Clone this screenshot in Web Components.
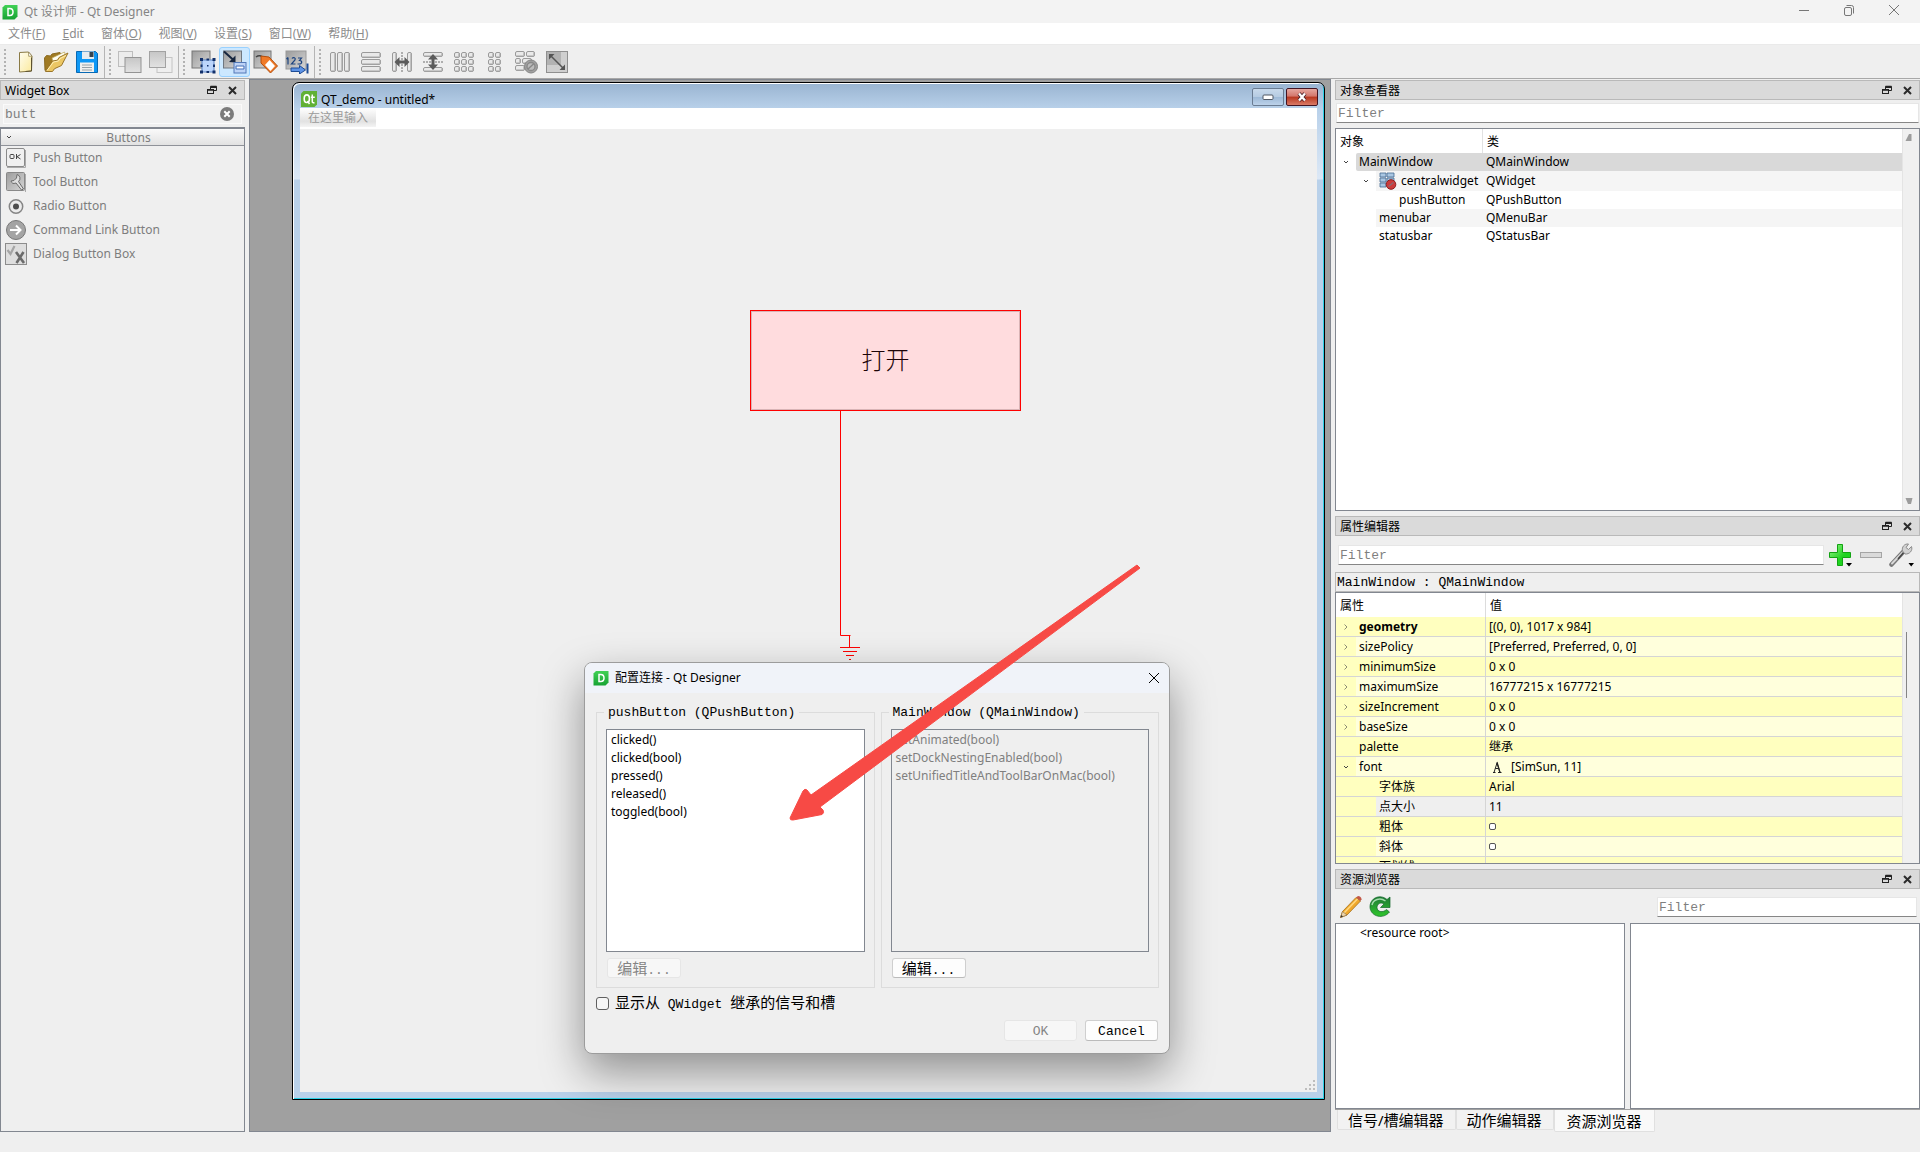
<!DOCTYPE html>
<html lang="zh-CN">
<head>
<meta charset="utf-8">
<title>Qt 设计师 - Qt Designer</title>
<style>
:root{
  --ui:"Noto Sans","Noto Sans CJK SC",sans-serif;
  --mono:"Liberation Mono","Noto Sans CJK SC",monospace;
  --frame:#828790;
  --face:#efefef;
}
html,body{margin:0;height:100%}
body{background:var(--face);font:12px/18px var(--ui);color:#000}
</style>
</head>
<body>
<designer-app></designer-app>
<script>
const BASE = `*{box-sizing:border-box}
button,input{font:inherit;color:inherit;margin:0;padding:0;border:0;background:none;outline:0;min-width:0}
ul{margin:0;padding:0;list-style:none}
table{border-collapse:separate;border-spacing:0}
th{font-weight:400;text-align:left}`;

function define(name, css, html, setup){
  const tpl = document.createElement('template');
  tpl.innerHTML = `<style>${BASE}${css}</style>${html}`;
  customElements.define(name, class extends HTMLElement{
    constructor(){
      super();
      this.attachShadow({mode:'open'}).append(tpl.content.cloneNode(true));
    }
    connectedCallback(){
      if(setup && !this.ready){ this.ready = true; setup(this, this.shadowRoot); }
    }
  });
}

/* ---------- icons: [width, height, svg body] ---------- */
const bar = (x,y,w,h)=>`<rect x="${x+.5}" y="${y+.5}" width="${w-1}" height="${h-1}" rx="1.5" fill="#e9e9e9" stroke="#9a9a9a"/><path d="M${x+1.5} ${y+h-1}h${w-3}M${x+w-1} ${y+1.5}v${h-3}" stroke="#a8a8a8" stroke-width="1.2"/>`;
const cells = (cols,x0)=>{let s='';for(let r=0;r<3;r++)for(let c=0;c<cols;c++)s+=bar(x0+c*7,2+r*7,6,6);return s;};
const GREY = `<defs><linearGradient id="g" x1="0" y1="0" x2="0" y2="1"><stop offset="0" stop-color="#c6c6c6"/><stop offset="1" stop-color="#e2e2e2"/></linearGradient><linearGradient id="d" x1="0" y1="0" x2="1" y2="1"><stop offset="0" stop-color="#9c9c9c"/><stop offset="1" stop-color="#d6d6d6"/></linearGradient></defs>`;
const ICONS = {
  app:[16,16,`<defs><linearGradient id="a" x1="0" y1="0" x2="0" y2="1"><stop offset="0" stop-color="#41d155"/><stop offset="1" stop-color="#17a333"/></linearGradient></defs><path d="M3 1h12.5v11.5l-3 3H.5V3.500z" fill="url(#a)"/><path d="M6 4.500h1.800c2 0 3.200 1.300 3.200 3.500s-1.200 3.500-3.200 3.500H6z" fill="none" stroke="#fff" stroke-width="1.500"/>`],
  min:[12,12,`<path d="M1 6.500h10" stroke="#777"/>`],
  restore:[12,12,`<rect x="1.500" y="3.500" width="7" height="8" rx="1.500" fill="none" stroke="#777"/><path d="M3.500 1.500h5a2 2 0 0 1 2 2v6" fill="none" stroke="#777"/>`],
  close:[12,12,`<path d="M1 1l10 10M11 1l-10 10" stroke="currentColor" fill="none"/>`],
  float:[10,10,`<path d="M3.500 4V1.500h6v4H7M3.500 2.500h6" fill="none" stroke="#222"/><rect x=".5" y="4.500" width="6" height="4" fill="none" stroke="#222"/><path d="M.5 5h6M3.500 1.500h6" stroke="#222" stroke-width="1.600"/>`],
  x:[9,9,`<path d="M1 1l7 7M8 1l-7 7" stroke="#2b2b2b" stroke-width="2"/>`],
  newfile:[24,24,`<defs><linearGradient id="n" x1="0" y1="0" x2="1" y2="1"><stop offset="0" stop-color="#fffdf0"/><stop offset="1" stop-color="#fbe99b"/></linearGradient></defs><path d="M6.500 2.500l9-.5 3.500 4-.5 15-12 1z" fill="url(#n)" stroke="#8a7a45"/><path d="M15.500 2l.2 4.300 3.300-.2z" fill="#fff" stroke="#8a7a45" stroke-width=".7"/><path d="M18.500 7.500v13.500l-6 .5" stroke="#5d5230" fill="none"/>`],
  open:[26,24,`<path d="M2 20.500L1.500 8l2-2.500 4 .5 1.500-2L17 2.500l1 2.500-8 11z" fill="#a07a22" stroke="#8a6a20"/><path d="M9 8l12.500-6 1 4-12 8z" fill="#fffef0" stroke="#bba65a" stroke-width=".7"/><path d="M2.500 21.500L9.500 11l5-.8 1.500-2.700 9-4.500-6.500 12.500-7 3.200-2 2.800z" fill="#ecc764" stroke="#99752a"/><path d="M4 20.500l6.500-8.500 5-1 1.500-2.500 6-3" stroke="#fff0b8" fill="none"/>`],
  save:[24,24,`<path d="M1.500 1.500h19l2 2v19h-21z" fill="#0f98f5" stroke="#0869b4"/><path d="M7 1.500h12v7.500H7z" fill="#e8edf0"/><path d="M14.500 2h4v5h-4z" fill="#36444f"/><path d="M5 12.500h14V22H5z" fill="#f1f1ef"/><path d="M7 15h10M7 17.500h10M7 20h10" stroke="#97a2a8"/>`],
  raise:[26,24,GREY+`<rect x="1.500" y="1.500" width="14" height="15" fill="#ececec" stroke="#bdbdbd"/><rect x="8" y="7.500" width="16" height="15" fill="url(#g)" stroke="#949494"/>`],
  lower:[26,24,GREY+`<rect x="9" y="7.500" width="15" height="15" fill="#efefef" stroke="#c4c4c4"/><rect x="1.500" y="1.500" width="16" height="16" fill="url(#g)" stroke="#a2a2a2"/>`],
  widgets:[26,24,GREY+`<rect x="1" y="1" width="18" height="17" fill="url(#d)" stroke="#777"/><rect x="11" y="10" width="12" height="12" fill="#bcd5fb" stroke="#5b83c4"/><path d="M9 8h3v3H9zM21.500 8h3v3h-3zM9 20.500h3v3H9zM21.500 20.500h3v3h-3zM15.500 8.500h2.500v2h-2.500zM15.500 21h2.500v2h-2.500zM9.500 14.500h2v2.500h-2zM22 14.500h2v2.500h-2zM16 15h1.500v1.500H16z" fill="#12306b"/>`],
  signals:[26,24,GREY+`<rect x="1.500" y="1" width="18" height="17" fill="url(#d)" stroke="#6f7780"/><path d="M2 1.500l10 9" stroke="#17263f" stroke-width="2"/><path d="M13.500 12.500V5.500L7 12z" fill="#17263f"/><rect x="12" y="12.500" width="12" height="10.500" fill="#bdd3f6" stroke="#5379b8"/><path d="M14.500 17.500h7" stroke="#fff" stroke-width="2.500"/><path d="M14 16h8v3h-8z" fill="none" stroke="#4973b8"/>`],
  buddy:[26,24,GREY+`<rect x="1" y="1" width="17" height="17" fill="url(#d)" stroke="#777"/><path d="M3 7c4-3 6 0 9 2" stroke="#444" fill="none" stroke-width="1.500"/><path d="M8 6l8 1 8.500 9-7 7L8 13z" fill="#f07a28" stroke="#b24d0c"/><path d="M16.500 10l5.500 6-4.500 5-5.500-6z" fill="#fff"/>`],
  tabs:[26,24,GREY+`<rect x="2" y="1" width="20" height="18" fill="url(#d)" stroke="#999"/><path d="M4 7.500v7M2.500 9l1.500-1.500M8 8.500c1.500-2 4-.5 3 1.500l-3.500 4h4M14 8h3.500l-2 2.500c3 0 3 3.500-.5 3.500h-1.500" stroke="#1c437f" stroke-width="1.200" fill="none"/><path d="M7 18h8.500v-2.500l6 4.500-6 4v-2.500H7z" fill="#5c93e6" stroke="#1e4c95"/><path d="M23.500 13.500v10" stroke="#1e4c95" stroke-width="2"/>`],
  hlayout:[24,24,bar(2,2,6,20)+bar(9,2,6,20)+bar(16,2,6,20)],
  vlayout:[24,24,bar(2,2,20,6)+bar(2,9,20,6)+bar(2,16,20,6)],
  hsplit:[24,24,bar(2,2,5,20)+bar(17,2,5,20)+`<path d="M12 2v20" stroke="#999" stroke-width="1.500" stroke-dasharray="2 1"/><path d="M4.500 12l5-5v3.500h5V7l5 5-5 5v-3.500h-5V17z" fill="#5b5b5b"/>`],
  vsplit:[24,24,bar(2,2,20,5)+bar(2,17,20,5)+`<path d="M2 12h20" stroke="#999" stroke-width="1.500" stroke-dasharray="2 1"/><path d="M12 4l5 5.500h-3.500v5H17L12 20l-5-5.500h3.500v-5H7z" fill="#5b5b5b"/>`],
  grid:[24,24,cells(3,2)],
  form:[24,24,cells(2,5)],
  breaklayout:[26,24,bar(2,1,10,6)+bar(13,1,9,6)+bar(2,8,6,6)+bar(9,8,10,6)+bar(2,15,10,6)+`<circle cx="18" cy="16.500" r="6.500" fill="#a0a0a0" stroke="#858585"/><circle cx="18" cy="16.500" r="4" fill="#bcbcbc" stroke="#888" stroke-width="1.300"/><path d="M15 19l6-5.500" stroke="#888" stroke-width="1.500"/>`],
  adjust:[24,24,GREY+`<rect x="1.500" y="1.500" width="21" height="21" fill="#cfcfcf" stroke="#8f8f8f"/><rect x="2" y="2" width="14" height="13" fill="#b2b2b2"/><path d="M5.500 5.500l13 13" stroke="#555" stroke-width="1.500"/><path d="M4 4h5.500L4 9.500zM20 20h-5.500l5.500-5.500z" fill="#555"/>`],
  clear:[14,14,`<circle cx="7" cy="7" r="7" fill="#7b7b7b"/><path d="M4.300 4.300l5.400 5.400M9.700 4.300l-5.400 5.400" stroke="#fff" stroke-width="2"/>`],
  chevdown:[8,8,`<path d="M2 3L4 5l2-2" fill="none" stroke="#444"/>`],
  chevright:[8,8,`<path d="M2.500 1.500L5 4 2.500 6.500" fill="none" stroke="#8d8d75"/>`],
  pushb:[22,22,`<rect x="1.500" y="1.500" width="18" height="18" rx="1.500" fill="#f0f0f0" stroke="#8a8a8a"/><path d="M2 20.500h18.500V3" stroke="#aaa" fill="none"/><rect x="5" y="7.500" width="4" height="4" rx="1" fill="none" stroke="#444"/><path d="M11.500 7v5M15.500 7.500L12 9.700l3.500 2.300" fill="none" stroke="#444"/>`],
  toolb:[22,22,GREY+`<rect x="1.500" y="1.500" width="18" height="18" rx="1" fill="url(#d)" stroke="#888"/><path d="M20.500 3v18" stroke="#aaa"/><path d="M12 3.500a4 4 0 0 1 1.500 7l5 7.500-2 1-5.500-7c-3 1-4 .5-5-2l3-.5 2.500-2.500z" fill="#dedede" stroke="#6b6b6b"/>`],
  radiob:[22,22,`<circle cx="11" cy="11.500" r="6.700" fill="#ececec" stroke="#858585" stroke-width="1.500"/><circle cx="11" cy="11.500" r="3" fill="#4e4e4e"/>`],
  linkb:[22,22,`<circle cx="11" cy="11" r="9.500" fill="#a4a4a4" stroke="#777"/><path d="M5 11h10M11 6.500l4.500 4.500-4.500 4.500" fill="none" stroke="#fff" stroke-width="2"/>`],
  dialogb:[22,22,`<rect x=".5" y=".5" width="21" height="21" fill="#dedede" stroke="#8c8c8c"/><path d="M2.500 7l3 4 4-8" fill="none" stroke="#a5a5a5" stroke-width="2.200"/><path d="M11 9l8 11M18.500 9l-7 11" stroke="#6b6b6b" stroke-width="2.600"/>`],
  qt:[16,16,`<path d="M2.500 0H16v13.500L13.500 16H0V2.500z" fill="#61b136"/><ellipse cx="5.800" cy="7.700" rx="2.600" ry="3.800" fill="none" stroke="#fff" stroke-width="1.600"/><path d="M6.500 10l2 3M9.800 6.200h4M11.300 3.500v7c0 1.200.8 1.500 2.200 1.200" fill="none" stroke="#fff" stroke-width="1.500"/>`],
  central:[18,18,`<path d="M1 1h6v4H1zM8 1h7v4H8zM1 6h6v4H1zM8 6h7v4H8zM1 11h6v4H1z" fill="#a9c6e2" stroke="#456a92" stroke-width=".8"/><circle cx="12" cy="12.500" r="4.800" fill="#cc3b3b" stroke="#8d1f1f"/><path d="M9.500 14.500l5-4" stroke="#8d6a72" stroke-width="1.500"/>`],
  plus:[24,24,`<defs><linearGradient id="p" x1="0" y1="0" x2="1" y2="1"><stop offset="0" stop-color="#9cf58c"/><stop offset=".6" stop-color="#1fd320"/></linearGradient></defs><path d="M9.500 1.500h5v8h8v5h-8v8h-5v-8h-8v-5h8z" fill="url(#p)" stroke="#12a312"/><path d="M18 20h6l-3 3.500z" fill="#000"/>`],
  minus:[24,24,`<rect x="1.500" y="9.500" width="21" height="5" fill="#dadada" stroke="#a5a5a5"/>`],
  wrench:[26,24,`<path d="M2.500 21.500L15 8" stroke="#777" stroke-width="4.500" stroke-linecap="round"/><path d="M3 20.500L15.500 7.500" stroke="#d8d8d8" stroke-width="2" stroke-linecap="round"/><path d="M9 16l6-7" stroke="#444" stroke-width="1.500"/><path d="M13.500 8c-1-4 2-7.500 6-7l-2.500 3.500 2.500 2 3-3c1.500 4-2 8-6.500 7.500z" fill="#d2d2d2" stroke="#8c8c8c"/><path d="M19.500 20h5.500l-2.800 3.500z" fill="#000"/>`],
  afont:[12,16,`<path d="M2 13.500h2.500M7 13.500h3.500M3 13.500L6 4l3 9.500M4.300 9.500h3.400" fill="none" stroke="#222"/><path d="M6 3l3 10.500" stroke="#222" stroke-width="1.200"/>`],
  pencil:[24,24,`<path d="M1.500 22.500l2-6L17 2.500l4.500 3.500L8 20z" fill="#f0a82c" stroke="#a5701a" stroke-width=".8"/><path d="M5 18L18.500 4" stroke="#ffd982" stroke-width="1.500"/><path d="M1.500 22.500l2-6 4.500 3.500z" fill="#ead3aa" stroke="#8b6a3a" stroke-width=".6"/><path d="M1.500 22.500l.8-2.500 1.800 1.500z" fill="#333"/><path d="M17 2.500l2-1.500c2 0 3.500 1.500 3.500 3.300L21.500 6z" fill="#c35848"/>`],
  reload:[24,24,`<defs><linearGradient id="r" x1="0" y1="0" x2="0" y2="1"><stop offset="0" stop-color="#1f7a35"/><stop offset="1" stop-color="#2fc52b"/></linearGradient></defs><path d="M22 2v10.500H12.500l3.500-3.500c-3-2-7-.5-7 3.500 0 4.500 6 5.500 9.500 2l3 2.500c-6 7.500-18.500 5-19.500-4.500C1.500 3 12-1.500 19 4.500z" fill="url(#r)" stroke="#14672b" stroke-width=".7"/><path d="M4 10C5 4.500 12 2 17.500 6" fill="none" stroke="#a6dcae" stroke-width="1.500"/>`],
  mdimin:[12,8,`<rect x="1" y="2" width="10" height="4.500" rx="1" fill="#fff" stroke="#515965"/>`],
  mdiclose:[14,12,`<path d="M4 2.500l6 7M10 2.500l-6 7" stroke="#4a2028" stroke-width="4"/><path d="M4 2.500l6 7M10 2.500l-6 7" stroke="#fff" stroke-width="2.300"/>`],
  up:[12,10,`<path d="M6 1l2.500 0V8H2.500z" fill="#9c9c9c"/>`],
  down:[12,10,`<path d="M2.500 2h7L8 8H5z" fill="#9c9c9c"/>`],
  grip:[10,10,`<path d="M8 0h2v2H8zM4 4h2v2H4zM8 4h2v2H8zM0 8h2v2H0zM4 8h2v2H4zM8 8h2v2H8z" fill="#bdbdbd"/>`]
};
define('qd-icon', `:host{display:block;flex:none}svg{display:block}`, ``, (el,root)=>{
  const [w,h,body] = ICONS[el.getAttribute('name')];
  root.innerHTML += `<svg width="${w}" height="${h}" viewBox="0 0 ${w} ${h}" aria-hidden="true">${body}</svg>`;
});

/* ---------- main window chrome ---------- */
define('qd-titlebar', `:host{display:flex;align-items:center;height:23px;background:#f3f3f3;color:#858585;padding:0 4px 0 2px}
span{margin-left:6px;flex:1}
button{width:45px;height:20px;margin-bottom:3px;display:flex;align-items:center;justify-content:center;color:#777}`,
`<qd-icon name="app"></qd-icon><span><slot></slot></span>
<button aria-label="最小化"><qd-icon name="min"></qd-icon></button><button aria-label="还原"><qd-icon name="restore"></qd-icon></button><button aria-label="关闭"><qd-icon name="close"></qd-icon></button>`);

define('qd-menubar', `:host{display:flex;height:22px;background:#fff;border-bottom:1px solid #eaeaea;color:#8c8c8c}
button{padding:0 9px 0 8px;height:21px;line-height:21px;white-space:nowrap}`,
`<button>文件(<u>F</u>)</button><button><u>E</u>dit</button><button>窗体(<u>O</u>)</button><button>视图(<u>V</u>)</button><button>设置(<u>S</u>)</button><button>窗口(<u>W</u>)</button><button>帮助(<u>H</u>)</button>`);

define('qd-toolgroup', `:host{display:flex;align-items:center;height:32px;padding:0 2px 0 4px;border-right:1px solid #b5b5b5}
:host(:last-of-type){border-right:0}
i{width:2px;height:26px;margin-right:3px;background:repeating-linear-gradient(#b2b2b2 0 2px,transparent 2px 4px)}`,
`<i></i><slot></slot>`);
define('qd-tool', `:host{display:block}
button{display:flex;align-items:center;justify-content:center;width:31px;height:30px;border:1px solid transparent;border-radius:3px}
:host([checked]) button{background:#cce8ff;border-color:#99d1ff}`,
`<button></button>`, (el,root)=>{
  const button = root.querySelector('button');
  button.setAttribute('aria-label', el.getAttribute('label') || el.getAttribute('icon'));
  button.innerHTML = `<qd-icon name="${el.getAttribute('icon')}"></qd-icon>`;
});

/* ---------- docks ---------- */
define('qd-dock', `:host{display:flex;flex-direction:column;min-height:0;min-width:0}
header{display:flex;align-items:center;height:20px;flex:none;padding:0 4px;background:#dadada;border:1px solid #b9b9b9}
header span{flex:1;line-height:18px;padding-top:2px}
header button{width:24px;height:18px;display:flex;align-items:center;justify-content:center}
header button:last-child{width:16px}`,
`<header><span></span><button aria-label="浮动"><qd-icon name="float"></qd-icon></button><button aria-label="关闭"><qd-icon name="x"></qd-icon></button></header><slot></slot>`,
(el,root)=>{root.querySelector('span').textContent = el.getAttribute('heading');});

define('qd-filter', `:host{display:flex;align-items:center;height:20px;background:#fff;border:1px solid #e6e6e6;border-bottom-color:#868686;padding:0 1px;font:13px/18px var(--mono)}
:host([flat]){background:#f1f1f1;border-color:#fafafa;color:#808080}
input{flex:1;height:18px;padding-top:2px}
input::placeholder{color:#7f7f7f;opacity:1}`,
`<input type="text" placeholder="Filter" aria-label="Filter"><slot></slot>`,
(el,root)=>{ if(el.hasAttribute('value')) root.querySelector('input').value = el.getAttribute('value'); });

define('widget-list', `:host{display:flex;flex-direction:column;flex:1;border:1px solid var(--frame);border-top-width:2px;color:#7d7d7d}
h3{margin:0;height:17px;display:flex;align-items:center;font:inherit;line-height:17px;background:linear-gradient(#fafafa,#e2e2e2);border-bottom:1px solid #8f9299}
h3 qd-icon{margin-left:4px}
h3 span{flex:1;text-align:center;padding-top:1px}
li{height:24px;display:flex;align-items:center;gap:6px;padding-left:4px}`,
`<h3><qd-icon name="chevdown"></qd-icon><span>Buttons</span></h3>
<ul><li><qd-icon name="pushb"></qd-icon>Push Button</li><li><qd-icon name="toolb"></qd-icon>Tool Button</li><li><qd-icon name="radiob"></qd-icon>Radio Button</li><li><qd-icon name="linkb"></qd-icon>Command Link Button</li><li><qd-icon name="dialogb"></qd-icon>Dialog Button Box</li></ul>`);

define('qd-scrollbar', `:host{display:flex;flex-direction:column;justify-content:space-between;align-items:center;width:17px;flex:none;background:#f0f0f0;border-left:1px solid #e4e4e4;padding:4px 5px 4px 0}
i{display:none}
:host([thumb]){display:block;padding:39px 0 0 3px}
:host([thumb]) qd-icon{display:none}
:host([thumb]) i{display:block;width:1px;height:66px;background:#858585}`,
`<qd-icon name="up"></qd-icon><i></i><qd-icon name="down"></qd-icon>`);

define('object-tree', `:host{display:flex;flex:1;min-height:0;background:#fff;border:1px solid var(--frame)}
div.v{flex:1;overflow:hidden}
table{width:100%;table-layout:fixed}
th{height:24px;padding:2px 4px 0}th:first-child{width:147px;border-right:1px solid #e2e2e2}
td{padding:0;height:18px;line-height:18px}
td+td{padding-left:3px}
.n{display:flex;height:18px;align-items:center;white-space:nowrap}
.n.t{height:20px}
.n .k{width:20px;flex:none;display:flex;justify-content:center;align-items:center}
.n .s{width:20px;flex:none}
.n b{font-weight:400;flex:1;align-self:stretch;display:flex;align-items:center;gap:4px;padding-left:3px}
.sel b,.sel td+td{background:#d9d9d9}.sel b{border-radius:2px 0 0 2px}
.alt b,.alt td+td{background:#f5f5f5}`,
`<div class="v"><table><thead><tr><th>对象</th><th>类</th></tr></thead><tbody>
<tr class="sel"><td><div class="n"><span class="k"><qd-icon name="chevdown"></qd-icon></span><b>MainWindow</b></div></td><td>QMainWindow</td></tr>
<tr class="alt"><td><div class="n t"><span class="s"></span><span class="k"><qd-icon name="chevdown"></qd-icon></span><b><qd-icon name="central"></qd-icon>centralwidget</b></div></td><td>QWidget</td></tr>
<tr><td><div class="n"><span class="s"></span><span class="s"></span><span class="s"></span><b>pushButton</b></div></td><td>QPushButton</td></tr>
<tr class="alt"><td><div class="n"><span class="s"></span><span class="s"></span><b>menubar</b></div></td><td>QMenuBar</td></tr>
<tr><td><div class="n"><span class="s"></span><span class="s"></span><b>statusbar</b></div></td><td>QStatusBar</td></tr>
</tbody></table></div><qd-scrollbar></qd-scrollbar>`);

const PROPS = [
  ['geometry','[(0, 0), 1017 x 984]',0,'r','bold'],['sizePolicy','[Preferred, Preferred, 0, 0]',0,'r'],
  ['minimumSize','0 x 0',0,'r'],['maximumSize','16777215 x 16777215',0,'r'],
  ['sizeIncrement','0 x 0',0,'r'],['baseSize','0 x 0',0,'r'],['palette','继承',0,''],
  ['font','[SimSun, 11]',0,'d','font'],['字体族','Arial',1,''],['点大小','11',1,'','cur'],
  ['粗体',null,1,''],['斜体',null,1,''],['下划线',null,1,'']];
define('property-table', `:host{display:flex;flex:1;min-height:0;background:#fff;border:1px solid var(--frame)}
div.v{flex:1;overflow:hidden}
table{width:100%;table-layout:fixed}
th{height:24px;padding:2px 4px 0}th:first-child{width:150px;border-right:1px solid #dcdcdc}
td{padding:0;height:20px;line-height:19px;border-bottom:1px solid #d5d5d5;background:#ffffbf}
td:first-child{border-right:1px solid #d5d5d5}
td+td{padding-left:3px}
.n{display:flex;height:19px}
.k{width:20px;display:flex;align-items:center;justify-content:center}
.n span{flex:1;padding-left:3px}
.even td+td,.even .n span{background:#ffffdc}
.cur td+td,.cur .n span{background:#efefef}
.bold .n span{font-weight:700}
.val{display:flex;align-items:center;height:19px;gap:8px}
.font .val{padding-left:2px}
input{appearance:none;width:7px;height:7px;border:1px solid #555;border-radius:2px;background:#fff}`,
`<div class="v"><table><thead><tr><th>属性</th><th>值</th></tr></thead><tbody></tbody></table></div><qd-scrollbar thumb></qd-scrollbar>`,
(el,root)=>{
  root.querySelector('tbody').innerHTML = PROPS.map(([n,v,d,c,k],i)=>
   `<tr class="${i%2?'even':''} ${k||''}"><td><div class="n"><i class="k">${c?`<qd-icon name="${c==='r'?'chevright':'chevdown'}"></qd-icon>`:''}</i>${d?'<i class="k"></i>':''}<span>${n}</span></div></td><td><div class="val">${k==='font'?'<qd-icon name="afont"></qd-icon>':''}${v===null?`<input type="checkbox" aria-label="${n}">`:v}</div></td></tr>`).join('');
});

define('property-tools', `:host{display:flex;align-items:center;height:36px;flex:none;padding:2px 3px 0 3px}
qd-filter{flex:1}`,
`<qd-filter></qd-filter><qd-tool icon="plus" label="添加"></qd-tool><qd-tool icon="minus" label="移除"></qd-tool><qd-tool icon="wrench" label="配置"></qd-tool>`);
define('object-label', `:host{display:block;height:20px;flex:none;line-height:18px;border:1px solid #b9b9b9;padding:1px 0 0 1px;font-family:var(--mono);font-size:13px}`,`<slot></slot>`);

define('resource-browser', `:host{display:flex;flex-direction:column;flex:1;min-height:0}
.bar{display:flex;height:34px;align-items:center;padding:2px 3px 0 4px;gap:5px;flex:none}
.bar button{width:24px;height:24px}
.bar span{flex:1}
qd-filter{width:260px}
.panes{display:flex;flex:1;gap:5px;min-height:0}
.panes div{flex:1;background:#fff;border:1px solid var(--frame);text-indent:24px}`,
`<div class="bar"><button aria-label="编辑资源"><qd-icon name="pencil"></qd-icon></button><button aria-label="重新加载"><qd-icon name="reload"></qd-icon></button><span></span><qd-filter></qd-filter></div>
<div class="panes"><div>&lt;resource root&gt;</div><div></div></div>`);

define('dock-tabs', `:host{display:flex;align-items:flex-start;height:23px;flex:none;border-top:1px solid #a0a0a0;padding-left:2px;font-size:15px}
button{height:20px;padding:0 11px 0 10px;background:#f2f2f2;border:1px solid #e0e0e0;border-top:0;border-radius:0 0 2px 2px;line-height:18px;white-space:nowrap}
button[aria-selected=true]{height:22px;background:#f9f9f9;line-height:20px;padding:0 12px}`,
`<button role="tab">信号/槽编辑器</button><button role="tab">动作编辑器</button><button role="tab" aria-selected="true">资源浏览器</button>`);

/* ---------- the form being edited ---------- */
define('form-window', `:host{display:flex;flex-direction:column;position:absolute;left:42px;top:2px;right:5px;bottom:31px;border:1px solid #000;border-radius:7px 7px 0 0;padding:0 7px 7px;background:linear-gradient(#99b4d1 0,#b9d1ea 26px,#dce8f6 96px,#b9d1ea 97px);box-shadow:inset 1px 1px #fff,inset -1px -1px #2bd0e6}
header{display:flex;align-items:center;height:25px;flex:none;gap:4px;padding:2px 0 0 1px}
header span{flex:1;line-height:18px;padding-top:6px}
header>qd-icon{margin-top:5px}
header button{width:32px;height:18px;border:1px solid #6a7c92;border-radius:2px;display:flex;align-items:center;justify-content:center;background:linear-gradient(#c8d9eb,#b5cbe2 50%,#9cb8d6 50%,#bcd2ea)}
header button.c{margin:0 -1px 0 -2px;border-color:#431422;background:linear-gradient(#e5a79f,#d3766b 45%,#b8371f 50%,#d97a66)}
nav{height:21px;flex:none;background:#fff;display:flex}
nav button{height:19px;padding:1px 8px 0;line-height:18px;color:#9b9b9b;background:linear-gradient(#fff,#e2e2e2 70%,#f4f4f4)}
.canvas{flex:1;position:relative;background:var(--face)}
.push{position:absolute;left:450px;top:181px;width:271px;height:101px;border:1px solid #f00;background:#ffdcde;box-shadow:inset 0 0 0 1px #d9b4b6;font-size:24px;font-weight:300;color:#1c0508;padding-bottom:2px}
svg{position:absolute;left:539px;top:282px}
.canvas>qd-icon{position:absolute;right:2px;bottom:2px}`,
`<header><qd-icon name="qt"></qd-icon><span>QT_demo - untitled*</span><button aria-label="最小化"><qd-icon name="mdimin"></qd-icon></button><button class="c" aria-label="关闭"><qd-icon name="mdiclose"></qd-icon></button></header>
<nav><button>在这里输入</button></nav>
<div class="canvas"><button class="push">打开</button>
<svg width="24" height="252" aria-hidden="true"><path d="M1.500 0V224.500H11.500M10.500 224V236M1 236.500H21M4 240.500H18M7 244.500H15M10 248.500H12" fill="none" stroke="#f00"/></svg>
<qd-icon name="grip"></qd-icon></div>`);

define('connect-dialog', `:host{display:block;position:absolute;left:334px;top:582px;width:586px;border:1px solid #9c9c9c;border-radius:8px;background:var(--face);box-shadow:0 18px 44px rgba(0,0,0,.4);overflow:hidden}
header{height:30px;display:flex;align-items:center;gap:6px;padding:0 9px 0 8px;background:#f0f3f9}
header span{flex:1}
.groups{display:flex;gap:6px;padding:10px 10px 0 11px}
fieldset{flex:1;min-width:0;margin:0;border:1px solid #dcdcdc;padding:8px 9px 9px}
legend{font:13px/18px var(--mono);padding:1px 4px 0;margin-left:-2px;height:18px}
ul{height:223px;border:1px solid var(--frame);background:#fff;padding:1px 4px}
.off ul{background:var(--face);color:#7f7f7f}
.edit,.foot button{border:1px solid #cfcfcf;border-bottom-color:#bbb;border-radius:3px;background:#fdfdfd}
.edit{display:flex;align-items:baseline;justify-content:center;width:74px;height:20px;margin:6px 0 0 1px;font-size:15px;line-height:18px}
.edit span{font:13px/18px var(--mono)}
button:disabled{color:#858585;border-color:#e6e6e6!important;background:#f7f7f7!important}
label{display:flex;align-items:center;gap:6px;margin:3px 11px 0;height:24px;font-size:15px;white-space:pre}
label span{font:13px/18px var(--mono)}
label div{display:flex;align-items:baseline}
label input{appearance:none;width:13px;height:13px;border:1px solid #606060;border-radius:3px;background:#f6f6f6}
.foot{display:flex;justify-content:flex-end;gap:8px;padding:5px 11px 12px}
.foot button{width:73px;height:21px;padding-top:2px;font:13px/18px var(--mono)}`,
`<header><qd-icon name="app"></qd-icon><span>配置连接 - Qt Designer</span><qd-icon name="close"></qd-icon></header>
<div class="groups"><fieldset><legend>pushButton (QPushButton)</legend><ul><li>clicked()</li><li>clicked(bool)</li><li>pressed()</li><li>released()</li><li>toggled(bool)</li></ul><button class="edit" disabled>编辑<span>...</span></button></fieldset>
<fieldset class="off"><legend>MainWindow (QMainWindow)</legend><ul><li>setAnimated(bool)</li><li>setDockNestingEnabled(bool)</li><li>setUnifiedTitleAndToolBarOnMac(bool)</li></ul><button class="edit">编辑<span>...</span></button></fieldset></div>
<label><input type="checkbox"><div>显示从<span> QWidget </span>继承的信号和槽</div></label>
<div class="foot"><button disabled>OK</button><button>Cancel</button></div>`);

define('pointer-arrow', `:host{display:block;position:absolute;left:535px;top:480px;pointer-events:none}svg{display:block}`,
`<svg width="360" height="270" aria-hidden="true"><path d="M352 5L26 235L22 230Q20 228 18 231L5 258Q5 260.500 8 260L37 254.500Q39.500 253 38 250L35 247L355 8Z" fill="#f74a45" stroke="#f74a45" stroke-width="1" stroke-linejoin="round"/></svg>`);

define('mdi-area', `:host{display:block;position:relative;flex:1;min-width:0;background:#a0a0a0;border:1px solid var(--frame);overflow:hidden}`,
`<form-window></form-window><connect-dialog></connect-dialog><pointer-arrow></pointer-arrow>`);

define('designer-app', `:host{display:flex;flex-direction:column;min-height:100vh}
.tools{display:flex;padding:1px 0 0;height:34px;border-bottom:1px solid #a8a8a8;flex:none}
main{flex:1;display:flex;gap:4px;min-height:0}
.left{width:245px;flex:none;padding-top:1px}
.left qd-filter{margin:4px 3px 3px;height:20px}
.left qd-filter button{width:20px;height:14px}
.right{width:585px;flex:none;display:flex;flex-direction:column;gap:5px;padding-top:1px}
.d1{flex:431 1 0}.d2{flex:348 1 0}.d3{flex:263 1 0}
.d1 qd-filter{margin:3px 1px 5px}
footer{height:20px;flex:none}`,
`<qd-titlebar>Qt 设计师 - Qt Designer</qd-titlebar>
<qd-menubar></qd-menubar>
<div class="tools">
<qd-toolgroup><qd-tool icon="newfile" label="新建"></qd-tool><qd-tool icon="open" label="打开"></qd-tool><qd-tool icon="save" label="保存"></qd-tool></qd-toolgroup>
<qd-toolgroup><qd-tool icon="raise"></qd-tool><qd-tool icon="lower"></qd-tool></qd-toolgroup>
<qd-toolgroup><qd-tool icon="widgets"></qd-tool><qd-tool icon="signals" checked></qd-tool><qd-tool icon="buddy"></qd-tool><qd-tool icon="tabs"></qd-tool></qd-toolgroup>
<qd-toolgroup><qd-tool icon="hlayout"></qd-tool><qd-tool icon="vlayout"></qd-tool><qd-tool icon="hsplit"></qd-tool><qd-tool icon="vsplit"></qd-tool><qd-tool icon="grid"></qd-tool><qd-tool icon="form"></qd-tool><qd-tool icon="breaklayout"></qd-tool><qd-tool icon="adjust"></qd-tool></qd-toolgroup>
</div>
<main>
<qd-dock class="left" heading="Widget Box"><qd-filter flat value="butt"><button aria-label="清除"><qd-icon name="clear"></qd-icon></button></qd-filter><widget-list></widget-list></qd-dock>
<mdi-area></mdi-area>
<div class="right">
<qd-dock class="d1" heading="对象查看器"><qd-filter></qd-filter><object-tree></object-tree></qd-dock>
<qd-dock class="d2" heading="属性编辑器"><property-tools></property-tools><object-label>MainWindow : QMainWindow</object-label><property-table></property-table></qd-dock>
<qd-dock class="d3" heading="资源浏览器"><resource-browser></resource-browser><dock-tabs></dock-tabs></qd-dock>
</div>
</main>
<footer></footer>`);
</script>
</body>
</html>
